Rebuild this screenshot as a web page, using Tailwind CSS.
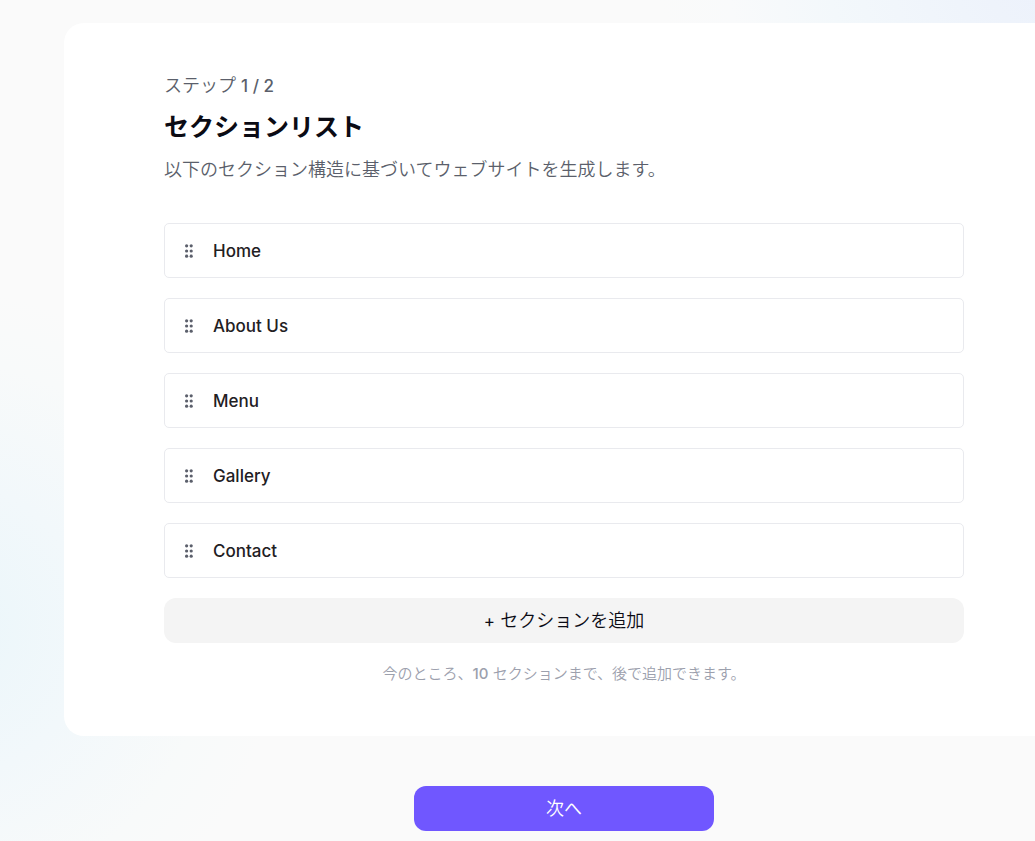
<!DOCTYPE html>
<html lang="ja">
<head>
    <meta charset="UTF-8">
    <meta name="viewport" content="width=device-width, initial-scale=1.0">
    <title>セクションリスト</title>
    <script src="https://cdn.jsdelivr.net/npm/@tailwindcss/browser@4"></script>
</head>
<body class="min-h-screen overflow-x-hidden bg-[#fafafa] bg-[radial-gradient(circle_at_-60px_630px,#eaf6fa_0px,#f2f8fb_150px,#f8fafa_270px,transparent_340px),radial-gradient(circle_at_calc(100%_+_60px)_-60px,#ebf0fc_0px,#eef3fb_120px,#f3f8fb_270px,#f9fafb_370px,transparent_440px)] bg-no-repeat font-['Inter','Noto_Sans_CJK_JP',sans-serif]">
    <form class="pt-[23px] pl-16 pb-[10px]">
        <!-- Section list card -->
        <main class="rounded-l-[20px] bg-white pt-12 pb-[51px] pl-[100px]">
            <div class="max-w-[800px]">
                <header>
                    <p class="text-[18px] leading-[30px] font-[350] text-[#5b5f6b]">ステップ <span class="text-[17px] font-medium">1 / 2</span></p>
                    <h1 class="mt-2 text-[25px] leading-9 font-bold text-[#0b0b14]">セクションリスト</h1>
                    <p class="mt-2 text-[18px] leading-[34px] font-[350] text-[#5b5f6b]">以下のセクション構造に基づいてウェブサイトを生成します。</p>
                </header>

                <!-- Sections -->
                <ul class="mt-9 space-y-5">
                    <li class="flex h-[55px] items-center gap-5 rounded-[5px] border border-[#e9eaee] px-5">
                        <svg class="h-4 w-2" viewBox="0 0 8 16" fill="#5b5f6b">
                            <circle cx="1.6" cy="2.8" r="1.6"/><circle cx="6.2" cy="2.8" r="1.6"/>
                            <circle cx="1.6" cy="8" r="1.6"/><circle cx="6.2" cy="8" r="1.6"/>
                            <circle cx="1.6" cy="13.2" r="1.6"/><circle cx="6.2" cy="13.2" r="1.6"/>
                        </svg>
                        <span class="pt-0.5 text-[17px] font-medium text-[#1f2023]">Home</span>
                    </li>
                    <li class="flex h-[55px] items-center gap-5 rounded-[5px] border border-[#e9eaee] px-5">
                        <svg class="h-4 w-2" viewBox="0 0 8 16" fill="#5b5f6b">
                            <circle cx="1.6" cy="2.8" r="1.6"/><circle cx="6.2" cy="2.8" r="1.6"/>
                            <circle cx="1.6" cy="8" r="1.6"/><circle cx="6.2" cy="8" r="1.6"/>
                            <circle cx="1.6" cy="13.2" r="1.6"/><circle cx="6.2" cy="13.2" r="1.6"/>
                        </svg>
                        <span class="pt-0.5 text-[17px] font-medium text-[#1f2023]">About Us</span>
                    </li>
                    <li class="flex h-[55px] items-center gap-5 rounded-[5px] border border-[#e9eaee] px-5">
                        <svg class="h-4 w-2" viewBox="0 0 8 16" fill="#5b5f6b">
                            <circle cx="1.6" cy="2.8" r="1.6"/><circle cx="6.2" cy="2.8" r="1.6"/>
                            <circle cx="1.6" cy="8" r="1.6"/><circle cx="6.2" cy="8" r="1.6"/>
                            <circle cx="1.6" cy="13.2" r="1.6"/><circle cx="6.2" cy="13.2" r="1.6"/>
                        </svg>
                        <span class="pt-0.5 text-[17px] font-medium text-[#1f2023]">Menu</span>
                    </li>
                    <li class="flex h-[55px] items-center gap-5 rounded-[5px] border border-[#e9eaee] px-5">
                        <svg class="h-4 w-2" viewBox="0 0 8 16" fill="#5b5f6b">
                            <circle cx="1.6" cy="2.8" r="1.6"/><circle cx="6.2" cy="2.8" r="1.6"/>
                            <circle cx="1.6" cy="8" r="1.6"/><circle cx="6.2" cy="8" r="1.6"/>
                            <circle cx="1.6" cy="13.2" r="1.6"/><circle cx="6.2" cy="13.2" r="1.6"/>
                        </svg>
                        <span class="pt-0.5 text-[17px] font-medium text-[#1f2023]">Gallery</span>
                    </li>
                    <li class="flex h-[55px] items-center gap-5 rounded-[5px] border border-[#e9eaee] px-5">
                        <svg class="h-4 w-2" viewBox="0 0 8 16" fill="#5b5f6b">
                            <circle cx="1.6" cy="2.8" r="1.6"/><circle cx="6.2" cy="2.8" r="1.6"/>
                            <circle cx="1.6" cy="8" r="1.6"/><circle cx="6.2" cy="8" r="1.6"/>
                            <circle cx="1.6" cy="13.2" r="1.6"/><circle cx="6.2" cy="13.2" r="1.6"/>
                        </svg>
                        <span class="pt-0.5 text-[17px] font-medium text-[#1f2023]">Contact</span>
                    </li>
                </ul>

                <button type="button" class="mt-5 h-[45px] w-full rounded-xl bg-[#f4f4f4] text-[18px] font-[350] text-[#0b0b14] hover:bg-gray-200"><span class="text-[17px] font-normal">+</span> セクションを追加</button>
                <p class="mt-5 text-center text-[15px] leading-[22px] font-[350] text-[#9ca0ad]">今のところ、<span class="font-medium">10</span> セクションまで、後で追加できます。</p>
            </div>
        </main>

        <!-- Next step -->
        <div class="mt-[50px] pl-[100px]">
            <div class="flex max-w-[800px] justify-center">
                <button type="submit" class="h-[45px] w-[300px] rounded-xl bg-[#7057ff] text-[18px] font-[350] text-white hover:bg-[#5f45f5]">次へ</button>
            </div>
        </div>
    </form>
</body>
</html>
